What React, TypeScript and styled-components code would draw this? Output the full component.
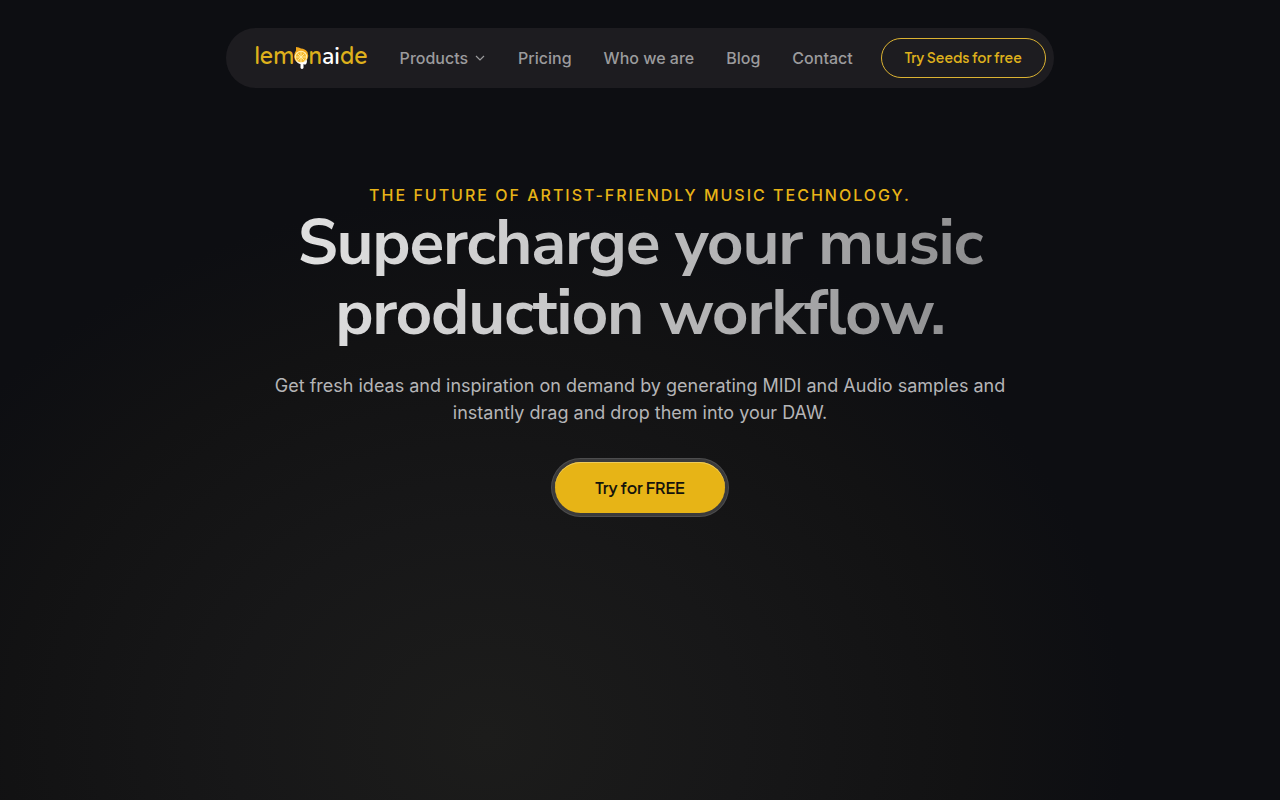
import React from "react";
import styled, { createGlobalStyle } from "styled-components";

const GlobalStyle = createGlobalStyle`
  *, *::before, *::after { box-sizing: border-box; }
  body {
    margin: 0;
    background: #0d0e12;
    color: #b5b5b7;
    font-family: Inter, "Liberation Sans", sans-serif;
  }
`;

const Page = styled.div`
  min-height: 100vh;
  padding: 28px 24px;
  background: radial-gradient(ellipse 640px 540px at 38% 92%, #1c1c1b 0%, #171718 40%, #121213 75%, #0d0e12 100%);
`;

const Header = styled.header`
  display: flex;
  align-items: center;
  width: fit-content;
  max-width: 100%;
  height: 60px;
  margin: 0 auto;
  padding: 0 8px 0 28px;
  border-radius: 30px;
  background: #1d1c20;
`;

const Logo = styled.a`
  display: flex;
  align-items: baseline;
  margin-right: 32px;
  padding-bottom: 4px;
  color: #deb01c;
  font-family: Quicksand, Nunito, Lato, sans-serif;
  font-size: 23px;
  font-weight: 600;
  line-height: 28px;
  text-decoration: none;
`;

const LogoAccent = styled.span`
  color: #fff;
  font-family: Nunito, Lato, sans-serif;
`;

const LemonMark = styled.svg`
  display: block;
  width: 16px;
  height: 22px;
  align-self: flex-end;
  margin: 0 -1px 2px;
`;

const Nav = styled.nav`
  display: flex;
  align-items: center;
  gap: 32px;
  margin-right: 28px;
`;

const navItem = `
  color: #9b9b9d;
  font-family: inherit;
  font-size: 16px;
  font-weight: 500;
  line-height: 24px;
`;

const NavLink = styled.a`
  ${navItem}
  text-decoration: none;
  white-space: nowrap;
`;

const NavButton = styled.button`
  ${navItem}
  display: flex;
  align-items: center;
  gap: 6px;
  padding: 0;
  border: 0;
  background: none;
  cursor: pointer;
`;

const OutlineButton = styled.button`
  height: 40px;
  padding: 0 23px 2px;
  border: 1px solid #dcb332;
  border-radius: 20px;
  background: transparent;
  color: #deb01c;
  font-family: "Plus Jakarta Sans", Inter, sans-serif;
  font-size: 14px;
  font-weight: 600;
  white-space: nowrap;
  cursor: pointer;
`;

const Hero = styled.main`
  display: flex;
  flex-direction: column;
  align-items: center;
  max-width: 760px;
  margin: 95px auto 0;
  text-align: center;
`;

const Eyebrow = styled.p`
  margin: 0 0 1px;
  color: #e8b417;
  font-size: 16px;
  font-weight: 500;
  line-height: 24px;
  letter-spacing: 2px;
  text-transform: uppercase;
`;

const Title = styled.h1`
  margin: 0;
  font-family: "Nunito Sans", Nunito, "Noto Sans", sans-serif;
  font-size: 64px;
  font-weight: 700;
  line-height: 70px;
  letter-spacing: -0.02em;
  background: linear-gradient(100deg, #e4e4e4 0%, #c4c4c5 45%, #858587 100%);
  background-clip: text;
  -webkit-background-clip: text;
  color: transparent;
`;

const Lead = styled.p`
  margin: 24px 0 36px;
  font-size: 18px;
  line-height: 27px;
`;

const PrimaryButton = styled.button`
  height: 51px;
  padding: 0 40px;
  border: 0;
  border-radius: 26px;
  background: #e7b416;
  box-shadow: inset 0 1px 0 #efcb5a, 0 0 0 3px #3a3a3b, 0 0 0 4px #4d4d4e;
  color: #15130c;
  font-family: "Plus Jakarta Sans", Inter, sans-serif;
  font-size: 16px;
  font-weight: 600;
  cursor: pointer;
`;

function Lemon() {
  return (
    <LemonMark viewBox="0 0 16 22" aria-hidden="true">
      <path d="M3 0Q6 0 8 1.500Q12 1.500 14.500 5Q16 9 14.500 12Q12 16 8 16Q2 16 1 10Q1 6 3 3.500Z" fill="#f2a71b" />
      <circle cx="8" cy="10" r="6.200" fill="#fff0b0" />
      <circle cx="8" cy="10" r="5.200" fill="#f5b92c" />
      <path d="M8 5v10M3 10h10M4.500 6.500l7 7M11.500 6.500l-7 7" stroke="#fff0b0" strokeWidth="0.8" />
      <path d="M2 12.500Q4 16 8 15.500Q12 15.500 14 12.500Q14 17 12.500 17.500Q11 17.500 10.500 17V21Q9 23 7.500 21V17Q5 17 2 12.500Z" fill="#fff" />
    </LemonMark>
  );
}

export default function App() {
  return (
    <>
      <GlobalStyle />
      <Page>
        <Header>
          <Logo href="#" aria-label="lemonaide">
            <span>lem</span>
            <Lemon />
            <span>n</span>
            <LogoAccent>ai</LogoAccent>
            <span>de</span>
          </Logo>
          <Nav>
            <NavButton type="button">
              Products
              <svg width="12" height="12" viewBox="0 0 12 12" fill="none" stroke="currentColor" strokeWidth="1.2" aria-hidden="true">
                <path d="M2 4l4 4 4-4" />
              </svg>
            </NavButton>
            <NavLink href="#pricing">Pricing</NavLink>
            <NavLink href="#about">Who we are</NavLink>
            <NavLink href="#blog">Blog</NavLink>
            <NavLink href="#contact">Contact</NavLink>
          </Nav>
          <OutlineButton type="button">Try Seeds for free</OutlineButton>
        </Header>
        <Hero>
          <Eyebrow>The future of artist-friendly music technology.</Eyebrow>
          <Title>Supercharge your music production workflow.</Title>
          <Lead>
            Get fresh ideas and inspiration on demand by generating MIDI and Audio samples and
            instantly drag and drop them into your DAW.
          </Lead>
          <PrimaryButton type="button">Try for FREE</PrimaryButton>
        </Hero>
      </Page>
    </>
  );
}
